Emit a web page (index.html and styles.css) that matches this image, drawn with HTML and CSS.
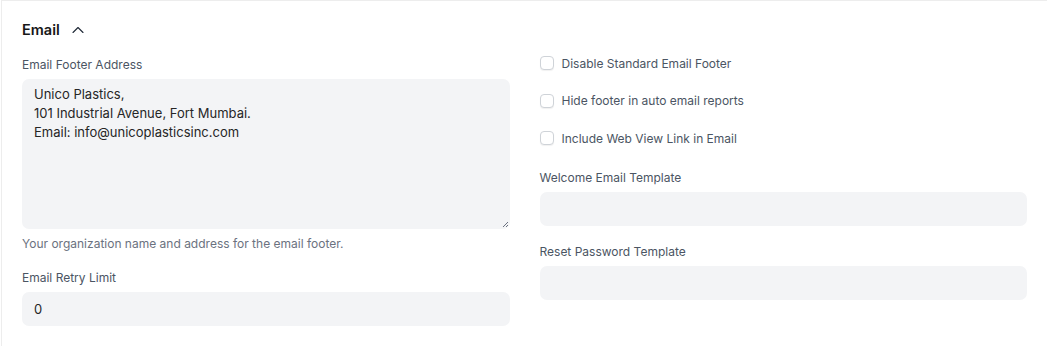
FILE: index.html
```
<!DOCTYPE html>
<html lang="en">
<head>
<meta charset="utf-8">
<title>Email settings</title>
<link rel="stylesheet" href="styles.css">
</head>
<body>
<div class="section">
  <div class="section-head">
    <span class="section-title">Email</span>
    <svg class="chevron" width="12" height="12" viewBox="0 0 12 12" fill="none">
      <path d="M1 8.5 6 3.5l5 5" stroke="#1f2937" stroke-width="1.1" stroke-linecap="round" stroke-linejoin="round"/>
    </svg>
  </div>
  <div class="columns">
    <div class="column">
      <div class="field">
        <label class="label">Email Footer Address</label>
        <div class="control textarea">Unico Plastics,
101 Industrial Avenue, Fort Mumbai.
Email: info@unicoplasticsinc.com<svg class="grip" width="8" height="8" viewBox="0 0 8 8"><path d="M7 2 2 7M7 5 5 7" stroke="#6b7280" stroke-width="1"/></svg></div>
        <p class="help">Your organization name and address for the email footer.</p>
      </div>
      <div class="field">
        <label class="label">Email Retry Limit</label>
        <div class="control">0</div>
      </div>
    </div>
    <div class="column">
      <div class="checks">
        <div class="check"><span class="box"></span><span>Disable Standard Email Footer</span></div>
        <div class="check"><span class="box"></span><span>Hide footer in auto email reports</span></div>
        <div class="check"><span class="box"></span><span>Include Web View Link in Email</span></div>
      </div>
      <div class="field">
        <label class="label">Welcome Email Template</label>
        <div class="control"></div>
      </div>
      <div class="field">
        <label class="label">Reset Password Template</label>
        <div class="control"></div>
      </div>
    </div>
  </div>
</div>
</body>
</html>
```
FILE: styles.css
```
* { box-sizing: border-box; }
body { margin: 0; padding-left: 1px; background: #fff;
       font-family: Inter, "Noto Sans", sans-serif; color: #1f2937; }

.section { border-top: 1px solid #ededed; border-left: 1px solid #ededed;
           padding: 18px 20px 20px 20px; height: 346px; }
.section-head { display: flex; align-items: center; gap: 12px; height: 20px; }
.section-title { font-size: 14.5px; font-weight: 600; color: #171717; }
.chevron { margin-top: 1px; }

.columns { display: grid; grid-template-columns: 1fr 1fr; gap: 30px; margin-top: 18px; }
.column { display: flex; flex-direction: column; }

.field { margin-bottom: 18px; }
.label { display: block; font-size: 12px; color: #4b5563; line-height: 16px; margin-bottom: 6px; }
.control { background: #f3f4f6; border-radius: 7px; height: 34px; padding: 0 12px;
           font-size: 13px; line-height: 34px; color: #262626; }
.textarea { position: relative; height: 150px; padding: 6px 12px; line-height: 19px;
            white-space: pre; }
.grip { position: absolute; right: 1px; bottom: 1px; }
.help { margin: 6px 0 0; font-size: 12px; color: #6b7280; line-height: 17px; }

.checks { margin-top: -2px; margin-bottom: 24px; display: flex; flex-direction: column; gap: 21.5px; }
.check { display: flex; align-items: center; gap: 8px; font-size: 12px; color: #4b5563;
         height: 16px; }
.box { width: 14px; height: 14px; border: 1px solid #cfd3d8; border-radius: 4px;
       background: #fff; box-shadow: 0 1px 1px rgba(0,0,0,0.06); }
```
